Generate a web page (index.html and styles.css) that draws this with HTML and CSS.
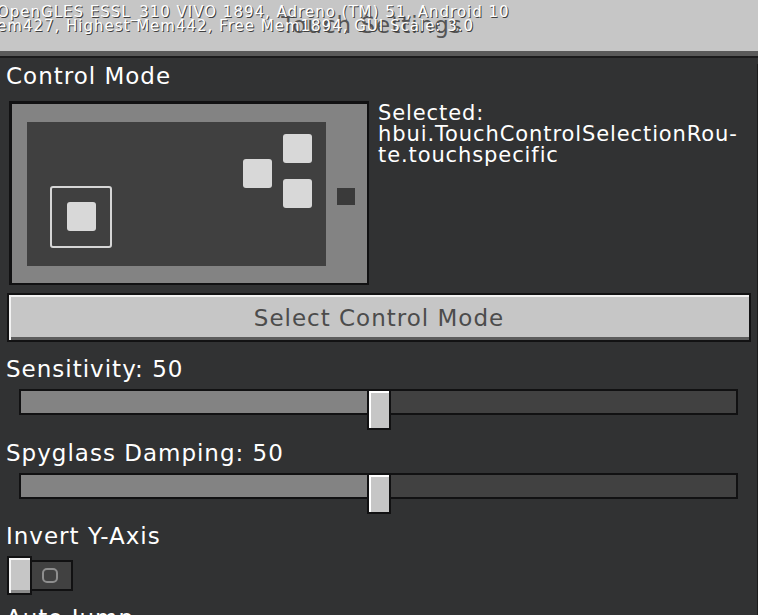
FILE: index.html
```html
<!DOCTYPE html>
<html lang="en">
<head>
<meta charset="utf-8">
<title>Touch Settings</title>
<link rel="stylesheet" href="styles.css">
</head>
<body>
<div class="page">
  <header class="topbar">
    <div class="title">Touch Settings</div>
    <div class="debug">
      <div class="debug-line">OpenGLES ESSL_310 VIVO 1894, Adreno (TM) 51, Android 10</div>
      <div class="debug-line">em427, Highest Mem442, Free Mem1894, GUI Scale: 3.0</div>
    </div>
  </header>
  <div class="topbar-edge"></div>
  <main class="content">
    <div class="label label-first">Control Mode</div>
    <div class="mode-row">
      <div class="preview">
        <svg width="360" height="184" viewBox="0 0 360 184" aria-hidden="true">
          <rect x="0" y="0" width="360" height="184" fill="#111112"/>
          <rect x="3" y="3" width="355" height="179" fill="#838383"/>
          <rect x="18" y="21" width="299" height="144" fill="#404040"/>
          <rect x="42" y="86" width="60" height="60" rx="2" fill="none" stroke="#d6d6d6" stroke-width="2"/>
          <rect x="58" y="101" width="29" height="29" rx="3" fill="#d8d8d8"/>
          <rect x="274" y="33" width="29" height="29" rx="3" fill="#d8d8d8"/>
          <rect x="234" y="58" width="29" height="29" rx="3" fill="#d8d8d8"/>
          <rect x="274" y="78" width="29" height="29" rx="3" fill="#d8d8d8"/>
          <rect x="328" y="87" width="18" height="17" fill="#3a3a3a"/>
        </svg>
      </div>
      <div class="selected">Selected:<br>hbui.TouchControlSelectionRou-<br>te.touchspecific</div>
    </div>
    <button class="btn">Select Control Mode</button>

    <div class="label label-after-btn">Sensitivity: 50</div>
    <div class="slider">
      <div class="track"><div class="fill" style="width: 50%"></div></div>
      <div class="thumb" style="left: calc(50% - 12px)"></div>
    </div>

    <div class="label label-after-slider">Spyglass Damping: 50</div>
    <div class="slider">
      <div class="track"><div class="fill" style="width: 50%"></div></div>
      <div class="thumb" style="left: calc(50% - 12px)"></div>
    </div>

    <div class="label label-after-slider2">Invert Y-Axis</div>
    <div class="toggle">
      <div class="toggle-thumb"></div>
      <div class="toggle-track"><span class="ring"></span></div>
    </div>

    <div class="label label-after-toggle">Auto Jump</div>
  </main>
</div>
</body>
</html>
```

FILE: styles.css
```css
* { box-sizing: border-box; }

html, body {
  margin: 0;
  padding: 0;
}

body {
  background: #313233;
  font-family: "DejaVu Sans", "Liberation Sans", sans-serif;
  color: #ffffff;
  width: 758px;
  height: 615px;
  overflow: hidden;
}

.page {
  width: 758px;
  height: 615px;
  overflow: hidden;
}

/* ---------- top bar ---------- */
.topbar {
  position: relative;
  height: 51px;
  background: #c6c6c6;
  overflow: hidden;
}

.title {
  padding-top: 13px;
  padding-right: 14px;
  text-align: center;
  font-size: 23px;
  line-height: 24px;
  letter-spacing: 1px;
  color: #555555;
}

.debug {
  position: absolute;
  top: 5px;
  left: -3px;
  font-size: 15px;
  line-height: 14px;
  letter-spacing: 1px;
  color: #ffffff;
  text-shadow: 1px 1px 0 #3f3f3f;
  white-space: nowrap;
}

.topbar-edge {
  height: 7px;
  background: #5a5a5a;
  border-bottom: 2px solid #1b1b1c;
}

/* ---------- content ---------- */
.content {
  padding-left: 6px;
  height: 557px;
  border-right: 1px solid #1c1c1d;
}

.label {
  font-size: 23px;
  line-height: 24px;
  letter-spacing: 1px;
  color: #ffffff;
  white-space: nowrap;
}

.label-first { margin-top: 6px; }
.label-after-btn { margin-top: 15px; }
.label-after-slider { margin-top: 11px; }
.label-after-slider2 { margin-top: 10px; }
.label-after-toggle { margin-top: 11px; }

.mode-row {
  display: flex;
  align-items: flex-start;
  gap: 9px;
  margin-top: 13px;
  margin-left: 3px;
}

.preview {
  width: 360px;
  height: 184px;
  flex: none;
}

.preview svg { display: block; }

.selected {
  margin-top: 2px;
  font-size: 21px;
  line-height: 21px;
  letter-spacing: 0.9px;
  color: #ffffff;
  white-space: nowrap;
}

.btn {
  display: block;
  margin-top: 8px;
  margin-left: 1px;
  width: 744px;
  height: 49px;
  padding: 0;
  border: 2px solid #121213;
  background: #c6c6c6;
  box-shadow: inset 2px 2px 0 #f2f2f2, inset 0 -3px 0 #5c5c5c;
  font-family: "DejaVu Sans", "Liberation Sans", sans-serif;
  font-size: 23px;
  letter-spacing: 1px;
  color: #4c4c4c;
  text-align: center;
}

/* ---------- sliders ---------- */
.slider {
  position: relative;
  margin-top: 6px;
  margin-left: 13px;
  width: 719px;
  height: 41px;
}

.track {
  margin-top: 8px;
  height: 26px;
  border: 2px solid #111112;
  background: #414141;
}

.fill {
  height: 100%;
  background: #838383;
}

.thumb {
  position: absolute;
  top: 0;
  width: 24px;
  height: 41px;
  border: 2px solid #111112;
  background: #c6c6c6;
  box-shadow: inset 2px 2px 0 #ffffff;
}

/* ---------- toggle ---------- */
.toggle {
  display: flex;
  align-items: center;
  margin-top: 8px;
  margin-left: 1px;
  height: 39px;
}

.toggle-thumb {
  position: relative;
  z-index: 1;
  flex: none;
  width: 25px;
  height: 39px;
  border: 2px solid #111112;
  background: #c6c6c6;
  box-shadow: inset 2px 2px 0 #f4f4f4, inset 0 -3px 0 #8c8c8c;
}

.toggle-track {
  flex: none;
  display: flex;
  align-items: center;
  margin-left: -2px;
  padding-left: 10px;
  width: 43px;
  height: 31px;
  border: 2px solid #111112;
  background: #414141;
}

.ring {
  display: block;
  width: 16px;
  height: 15px;
  border: 2px solid #8e8e8e;
  border-radius: 5px;
}
```
